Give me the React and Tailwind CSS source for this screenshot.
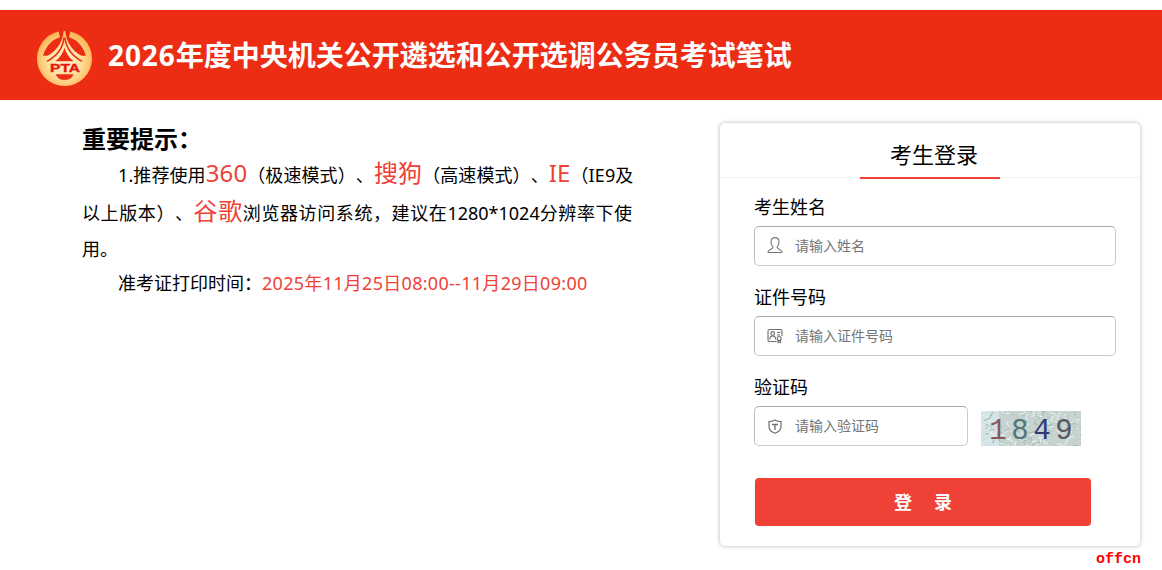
import React from "react";

const HINT_RED = "text-[#ef4136]";

function Logo() {
  return (
    <svg viewBox="0 0 165 165" className="w-[55px] h-[55px] shrink-0">
      <defs>
        <radialGradient id="gold" gradientUnits="userSpaceOnUse" cx="82.5" cy="90" r="85">
          <stop offset="0%" stopColor="#fff3cf" />
          <stop offset="60%" stopColor="#ffdf9f" />
          <stop offset="100%" stopColor="#fdb757" />
        </radialGradient>
      </defs>
      <circle cx="82.5" cy="82.5" r="82.5" fill="url(#gold)" />
      {/* sky behind the roof */}
      <path d="M64 -2H101L96 19C118 25 136 42 147 74L18 74C29 42 47 25 69 19Z" fill="#ec2d14" />
      {/* roof */}
      <path d="M80 0H85C88 36 108 66 152 84L148 98H17L13 84C57 66 77 36 80 0Z" fill="url(#gold)" />
      <path
        d="M81 20C78 50 60 75 30 91M84 20C87 50 105 75 135 91"
        fill="none"
        stroke="#ec2d14"
        strokeWidth="4.5"
      />
      <path d="M82.5 50C79 64 70 79 55 91H110C95 79 86 64 82.5 50Z" fill="#ec2d14" />
      <text
        x="39"
        y="123"
        textLength="90"
        lengthAdjust="spacingAndGlyphs"
        className="font-['Liberation_Sans'] text-[31px] font-bold fill-[#e8160f] stroke-[#e8160f] stroke-1"
      >
        PTA
      </text>
      <path d="M56 130H110C104 143 95 147 82.5 147C70 147 62 143 56 130Z" fill="#ec2d14" />
    </svg>
  );
}

function UserIcon() {
  return (
    <svg viewBox="0 0 16 18" className="w-4 h-[18px]" fill="none" stroke="#777" strokeWidth="1.1">
      <path d="M6 10C4.6 8.8 4 7 4 4.7C4 1.8 5.5 0.6 8 0.6S12 1.8 12 4.7C12 7 11.4 8.8 10 10C10 11.7 11 12 13 12.7C14.6 13.2 15 14 15 15.5H1C1 14 1.4 13.2 3 12.7C5 12 6 11.7 6 10Z" />
    </svg>
  );
}

function CardIcon() {
  return (
    <svg viewBox="0 0 16 18" className="w-4 h-[18px]" fill="none" stroke="#6f6f6f" strokeWidth="1.1">
      <path d="M9.5 14.5H2.5Q1 14.5 1 13V4Q1 2.5 2.5 2.5H13.5Q15 2.5 15 4V9" />
      <circle cx="5.7" cy="6.5" r="1.9" />
      <path d="M2.8 12.5C2.8 10 4 9 5.7 9S8.6 10 8.6 12.5M10 5.5H13.5M10 8H13" />
      <circle cx="12.2" cy="11.5" r="2" />
      <path d="M11 13.2V15.5L12.2 14.8L13.5 15.5V13.2" />
    </svg>
  );
}

function ShieldIcon() {
  return (
    <svg viewBox="0 0 16 18" className="w-4 h-[18px]" fill="none" stroke="#6f6f6f" strokeWidth="1.2">
      <path d="M8 3C6.2 4.2 4.2 4.6 2 4.6V9.5C2 12.5 4.5 15 8 16.3C11.5 15 14 12.5 14 9.5V4.6C11.8 4.6 9.8 4.2 8 3Z" />
      <path d="M5 7.5H11M8 7.5V13" strokeWidth="1.3" />
    </svg>
  );
}

const FIELDS = [
  { label: "考生姓名", placeholder: "请输入姓名", icon: UserIcon },
  { label: "证件号码", placeholder: "请输入证件号码", icon: CardIcon },
  { label: "验证码", placeholder: "请输入验证码", icon: ShieldIcon, captcha: true },
];

const DIGITS = [
  { char: "1", x: 17, color: "#8a5660" },
  { char: "8", x: 39, color: "#52747a" },
  { char: "4", x: 61, color: "#303c78" },
  { char: "9", x: 83, color: "#5c5560" },
];

// curved strokes scattered over the captcha background
const STROKES = Array.from({ length: 150 }, (_, i) => ({
  x: (i * 37.7) % 100,
  y: (i * 13.3 + (i % 7) * 3.1) % 35,
  dx: ((i * 7) % 15) - 7,
  dy: ((i * 5) % 11) - 5,
  color: ["#e9f3f2", "#a9bbb2", "#e0eeee", "#b9c8bd"][i % 4],
}));

function Captcha() {
  return (
    <div className="w-[100px] h-[35px] shrink-0 bg-[#c6d3ce]">
      <svg viewBox="0 0 100 35" className="w-[100px] h-[35px] overflow-visible">
        <rect width="18" height="35" fill="#d3e4e7" />
        <svg width="100" height="35">
          {STROKES.map((s, i) => (
            <path
              key={i}
              d={`M${s.x} ${s.y}q${s.dx} 0 ${s.dx} ${s.dy}`}
              fill="none"
              stroke={s.color}
              strokeWidth="1.1"
            />
          ))}
        </svg>
        {DIGITS.map((d) => (
          <text
            key={d.char}
            x={d.x}
            y="28"
            textAnchor="middle"
            fill={d.color}
            className="font-['Liberation_Mono'] text-[29px]"
          >
            {d.char}
          </text>
        ))}
      </svg>
    </div>
  );
}

function Field({ label, placeholder, icon: Icon, captcha }) {
  return (
    <div className="h-[90px]">
      <label className="block h-[30px] text-lg leading-[22px]">{label}</label>
      <div className="flex items-center gap-[13px]">
        <div
          className={`flex items-center h-10 pl-3 rounded-[5px] border border-[#ccc] border-t-[#aaa] border-l-[#bbb] ${
            captcha ? "w-[214px]" : "w-[362px]"
          }`}
        >
          <Icon />
          <input
            placeholder={placeholder}
            className="ml-3 w-36 h-8 pb-0.5 text-sm outline-none placeholder:text-[#757575]"
          />
        </div>
        {captcha && (
          <div className="pt-[5px]">
            <Captcha />
          </div>
        )}
      </div>
    </div>
  );
}

function LoginCard() {
  return (
    <div className="w-[420px] h-[423px] shrink-0 mt-[23px] rounded-[5px] bg-white shadow-[0_0_4px_rgba(0,0,0,0.3)]">
      <div className="flex justify-center h-[55px] border-b border-[#f2f2f2]">
        <h2 className="w-[140px] h-14 pl-2 text-center text-[22px] leading-[63px] border-b-2 border-[#ef4136]">
          考生登录
        </h2>
      </div>
      <div className="pl-[34px] pt-[18px]">
        {FIELDS.map((f) => (
          <Field key={f.label} {...f} />
        ))}
        <button className="flex items-center justify-center gap-[22px] w-[336px] h-12 ml-px mt-[12px] rounded bg-[#ef4136] text-lg font-bold text-white">
          <span>登</span>
          <span>录</span>
        </button>
      </div>
    </div>
  );
}

function Notice() {
  return (
    <div className="w-[560px] pt-[21px] text-lg whitespace-nowrap [text-spacing-trim:space-all]">
      <h3 className="h-9 text-2xl leading-9 font-bold">重要提示：</h3>
      <p className="h-[37px] pl-9 leading-[37px] tracking-[0.1px]">
        1.推荐使用<span className={`text-2xl leading-none ${HINT_RED}`}>360</span>（极速模式）、
        <span className={`text-2xl leading-none ${HINT_RED}`}>搜狗</span>（高速模式）、
        <span className={`text-2xl leading-none ${HINT_RED}`}>IE</span>（IE9及
      </p>
      <p className="h-[38px] leading-[38px] tracking-[0.6px]">
        以上版本）、<span className={`text-2xl leading-none ${HINT_RED}`}>谷歌</span>
        浏览器访问系统，建议在<span className="tracking-normal">1280*1024</span>分辨率下使
      </p>
      <p className="h-[34px] leading-[34px]">用。</p>
      <p className="h-[34px] pl-9 leading-[34px]">
        准考证打印时间：<span className={`tracking-[0.29px] ${HINT_RED}`}>2025年11月25日08:00--11月29日09:00</span>
      </p>
    </div>
  );
}

export default function App() {
  return (
    <div className="w-[1162px] h-[570px] pt-[10px] overflow-hidden bg-white text-black font-['Noto_Sans','Noto_Sans_CJK_SC',sans-serif]">
      <header className="flex items-center gap-4 h-[90px] pl-[37px] pt-[7px] bg-[#ec2d14]">
        <Logo />
        <h1 className="pb-[8px] text-[28px] leading-9 font-bold text-white whitespace-nowrap">
          <span className="tracking-[0.9px]">2026</span>年度中央机关公开遴选和公开选调公务员考试笔试
        </h1>
      </header>
      <main className="flex justify-between pl-[82px] pr-[22px]">
        <Notice />
        <LoginCard />
      </main>
      <footer className="pr-[21px] pt-[5px] text-right font-['Liberation_Mono',monospace] text-[15px] leading-[18px] font-bold text-[#f00]">
        offcn
      </footer>
    </div>
  );
}
